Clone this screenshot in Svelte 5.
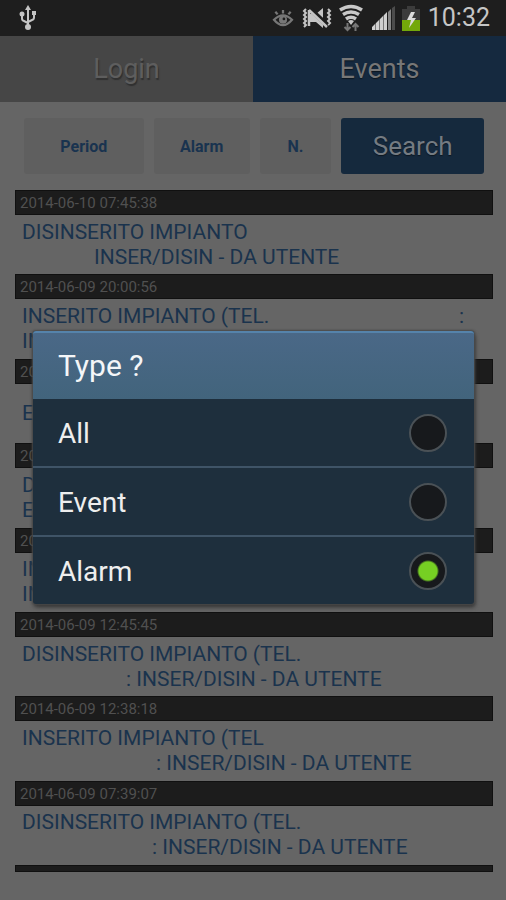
<script lang="ts">
  interface Line {
    text: string;
    indent?: number;
    tail?: string;
  }

  interface LogEntry {
    date: string;
    lines: Line[];
  }

  const entries: LogEntry[] = [
    { date: '2014-06-10 07:45:38', lines: [{ text: 'DISINSERITO IMPIANTO' }, { text: 'INSER/DISIN - DA UTENTE', indent: 72 }] },
    { date: '2014-06-09 20:00:56', lines: [{ text: 'INSERITO IMPIANTO (TEL.', tail: ':' }, { text: 'IN' }] },
    { date: '20', lines: [{ text: 'E' }] },
    { date: '20', lines: [{ text: 'D' }, { text: 'E' }] },
    { date: '20', lines: [{ text: 'IN' }, { text: 'IN' }] },
    { date: '2014-06-09 12:45:45', lines: [{ text: 'DISINSERITO IMPIANTO (TEL.' }, { text: ': INSER/DISIN - DA UTENTE', indent: 104 }] },
    { date: '2014-06-09 12:38:18', lines: [{ text: 'INSERITO IMPIANTO (TEL' }, { text: ': INSER/DISIN - DA UTENTE', indent: 134 }] },
    { date: '2014-06-09 07:39:07', lines: [{ text: 'DISINSERITO IMPIANTO (TEL.' }, { text: ': INSER/DISIN - DA UTENTE', indent: 130 }] },
  ];

  const options = ['All', 'Event', 'Alarm'];

  let selected = $state('Alarm');
  let tab = $state('Events');
</script>

<div class="screen">
  <header class="status-bar">
    <svg viewBox="0 0 18 26" width="18" height="26" fill="none" stroke="#c4c4c4" stroke-width="2">
      <path d="M9 4v18M3 10v3.500q0 2 2 2.500l4 2M15 9v3.500q0 2-2 2.500l-4 2" />
      <path d="M9 0l3 5H6z" fill="#c4c4c4" stroke="none" />
      <circle cx="3" cy="9" r="2.500" fill="#c4c4c4" stroke="none" />
      <path d="M13 6h4v4h-4z" fill="#c4c4c4" stroke="none" />
      <circle cx="9" cy="22" r="3" fill="#c4c4c4" stroke="none" />
    </svg>
    <div class="status-icons">
      <svg viewBox="0 0 24 20" width="22" height="18" fill="none" stroke="#777" stroke-width="2.500">
        <path d="M2 12q10-10 20 0q-10 12-20 0z" />
        <path d="M12 5V1M6 6L3.500 3M18 6l2.500-3" />
        <circle cx="12" cy="12" r="4.500" fill="#777" stroke="none" />
        <circle cx="13" cy="11" r="1.500" fill="#1e1e1e" stroke="none" />
      </svg>
      <svg class="mute" viewBox="0 0 30 22" width="30" height="22" fill="none" stroke="#c4c4c4" stroke-width="2">
        <path d="M4 2L2 4l2 2-2 2 2 2-2 2 2 2-2 2 2 2-2 2M26 2l2 2-2 2 2 2-2 2 2 2-2 2 2 2-2 2" />
        <path d="M8 7h6l7-6v20l-7-6H8z" fill="#c4c4c4" stroke="none" />
        <path d="M7 1l18 17" stroke="#1e1e1e" stroke-width="5" />
        <path d="M7 3v16M7 3l18 17" stroke-width="2.500" />
      </svg>
      <svg viewBox="0 0 26 28" width="26" height="28" fill="none" stroke="#c8c8c8" stroke-width="3.500">
        <path d="M2 6q11-7 22 0M5 10.500q8-5 16 0M8 15q5-3.500 10 0" />
        <path d="M10 17q3-2 6 0l-3 4z" fill="#c8c8c8" stroke="none" />
        <path d="M9.500 19v7M6.500 23l3 3 3-3M17.500 27v-7M14.500 23l3-3 3 3" stroke="#777" stroke-width="2" />
      </svg>
      <svg class="signal" viewBox="0 0 24 24" width="24" height="24">
        <path d="M0 24v-3l3-3v6zM4 24v-7l3-3v10zM8 24V13l3-3v14zM12 24V9l3-3v18z" fill="#d0d0d0" />
        <path d="M3 24v-6l1-1v7zM7 24V14l1-1v11zM11 24V10l1-1v15z" fill="#777" />
        <path d="M16 24V6l3-3v21z" fill="#888" />
        <path d="M20 24V2l3-2v24z" fill="#4c4c4c" />
      </svg>
      <svg viewBox="0 0 18 25" width="18" height="25">
        <path d="M5 0h8v3h5v22H0V3h5z" fill="#3c3c3c" />
        <path d="M0 14h18v11H0z" fill="#73a80a" />
        <path d="M9 6L5 14h4l-2 8 7-10h-4l3-6z" fill="#ddd" />
      </svg>
      <time class="clock">10:32</time>
    </div>
  </header>

  <nav class="tabs">
    {#each ['Login', 'Events'] as name}
      <button class="tab" class:active={tab === name} onclick={() => tab = name}>{name}</button>
    {/each}
  </nav>

  <div class="filters">
    <button class="filter period">Period</button>
    <button class="filter alarm">Alarm</button>
    <button class="filter count">N.</button>
    <button class="search">Search</button>
  </div>

  <main class="log">
    {#each entries as entry}
      <article class="entry">
        <div class="date">{entry.date}</div>
        <div class="message">
          {#each entry.lines as line}
            <div class="line" style:padding-left="{line.indent ?? 0}px">
              <span>{line.text}</span>
              {#if line.tail}<span>{line.tail}</span>{/if}
            </div>
          {/each}
        </div>
      </article>
    {/each}
    <div class="next-entry"></div>
  </main>

  <div class="overlay">
    <div class="dialog" role="dialog" aria-labelledby="dialog-title">
      <h2 id="dialog-title">Type ?</h2>
      {#each options as option}
        <label class="option">
          <span>{option}</span>
          <input type="radio" name="type" value={option} bind:group={selected} />
        </label>
      {/each}
    </div>
  </div>
</div>

<style>
  :global(body) {
    margin: 0;
    background: #656565;
  }

  .screen {
    position: relative;
    display: flex;
    flex-direction: column;
    box-sizing: border-box;
    min-height: 100vh;
    padding-bottom: 28px;
    background: #656565;
    font-family: Roboto, "Liberation Sans", sans-serif;
  }

  .status-bar {
    display: flex;
    align-items: center;
    justify-content: space-between;
    height: 36px;
    padding: 0 16px 0 19px;
    background: #1e1e1e;
  }

  .status-icons {
    display: flex;
    align-items: center;
    gap: 6px;
  }

  .mute {
    margin-left: 2px;
  }

  .signal {
    margin-left: 2px;
  }

  .clock {
    margin-left: 2px;
    color: #c6c6c6;
    font-size: 25px;
    line-height: 36px;
  }

  button {
    margin: 0;
    padding: 0;
    border: none;
    font-family: inherit;
    cursor: pointer;
  }

  .tabs {
    display: flex;
    height: 66px;
  }

  .tab {
    flex: 1;
    background: #464646;
    color: #5e5e5e;
    font-size: 27px;
    line-height: 32px;
    text-shadow: 1px 2px 1px #303030;
  }

  .tab.active {
    background: #15293f;
    color: #777;
    text-shadow: 0 1px 1px #0c1620;
  }

  .filters {
    display: flex;
    gap: 10px;
    height: 56px;
    margin: 16px 22px 16px 24px;
  }

  .filter {
    border-radius: 3px;
    background: #5f5f5f;
    color: #19334f;
    font-size: 16px;
    font-weight: 700;
  }

  .period {
    flex: 120;
  }

  .alarm {
    flex: 96;
  }

  .count {
    flex: 72;
  }

  .search {
    flex: 143;
    border-radius: 3px;
    background: #15293d;
    color: #747b82;
    font-size: 26px;
    text-shadow: 0 1px 1px #0c1620;
  }

  .log {
    display: flex;
    flex: 1;
    flex-direction: column;
    margin: 0 13px 0 15px;
  }

  .entry {
    display: flex;
    flex: 1 0 auto;
    flex-direction: column;
  }

  .date {
    height: 25px;
    padding-left: 5px;
    box-shadow: inset 0 0 0 1px #101010;
    background: #1c1c1c;
    color: #505050;
    font-size: 15px;
    line-height: 27px;
  }

  .message {
    display: flex;
    flex: 1;
    flex-direction: column;
    justify-content: center;
    min-height: 59px;
    padding: 0 29px 0 7px;
    box-sizing: border-box;
  }

  .line {
    display: flex;
    justify-content: space-between;
    color: #1a334d;
    font-size: 21px;
    line-height: 25px;
    white-space: nowrap;
  }

  .next-entry {
    height: 7px;
    box-shadow: inset 0 0 0 1px #101010;
    background: #1c1c1c;
  }

  .overlay {
    position: absolute;
    inset: 36px 0 0;
    display: flex;
    align-items: center;
    padding: 0 32px 2px 33px;
  }

  .dialog {
    flex: 1;
    border-radius: 3px;
    background: #1e2f3d;
    box-shadow: 0 0 2px 1px #4a4a4a, 1px 3px 4px #2e2e2e;
    color: #eee;
    font-size: 28px;
  }

  h2 {
    margin: 0;
    padding: 0 25px;
    border-top: 2px solid #5583ab;
    border-radius: 3px 3px 0 0;
    background: linear-gradient(#4a6887, #42647c);
    color: #f4f6f8;
    font-size: 30px;
    font-weight: 400;
    line-height: 66px;
  }

  .option {
    display: flex;
    align-items: center;
    justify-content: space-between;
    height: 65px;
    padding: 2px 27px 0 25px;
    border-bottom: 2px solid #3f5467;
    cursor: pointer;
  }

  .option:last-child {
    border-bottom: none;
  }

  input {
    appearance: none;
    width: 38px;
    height: 38px;
    margin: 0;
    border: 2px solid #4a5156;
    border-radius: 50%;
    background: #17191c;
    cursor: pointer;
  }

  input:checked {
    background: radial-gradient(circle, #76cf23 9px, #17191c 11px);
  }
</style>
